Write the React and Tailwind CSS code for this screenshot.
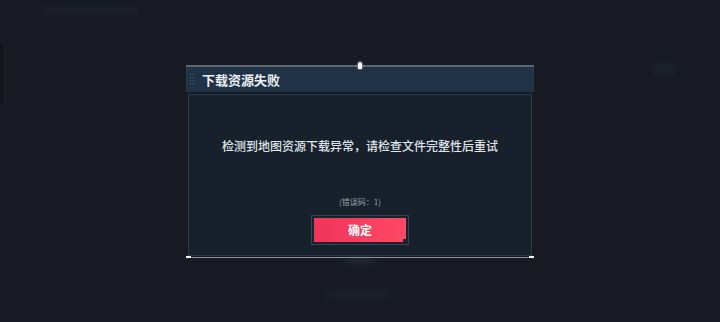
// Dialog: download failure
export default function App() {
  const font = { fontFamily: '"Noto Sans CJK SC", "Noto Sans", sans-serif' };
  return (
    <div className="relative w-[720px] h-[322px] overflow-hidden bg-[#171a23] flex items-center justify-center" style={font}>
      {/* faint background hints */}
      <div className="absolute left-[42px] top-[5px] w-[96px] h-[10px] rounded bg-[#1d2029] blur-[2px]" />
      <div className="absolute left-[-6px] top-[40px] w-[11px] h-[66px] rounded-md bg-[#12151c] border border-[#1f232c]" />
      <div className="absolute left-[653px] top-[62px] w-[22px] h-[14px] rounded bg-[#1e222b] blur-[3px]" />
      <div className="absolute left-[328px] top-[290px] w-[60px] h-[10px] rounded bg-[#1c2029] blur-[3px]" />
      <div className="absolute left-[345px] top-[256px] w-[30px] h-[8px] rounded bg-[#232831] blur-[3px]" />

      <div className="relative w-[348px] flex flex-col">
        {/* top line + pin */}
        <div className="h-[2px] bg-[#5d6670]" />
        <div className="absolute left-[172px] top-[-3px] w-[4px] h-[7px] rounded-t-full bg-white shadow-[0_0_3px_rgba(255,255,255,0.7)]" />

        {/* header */}
        <div className="h-[25px] bg-[#1f3246] flex items-center pl-[3px] border-x border-[#2a3b4d]">
          <div className="grid grid-cols-2 gap-[2px] mr-[8px] opacity-40">
            {Array.from({ length: 8 }).map((_, i) => (
              <div key={i} className="w-[1px] h-[1px] bg-[#9fb2c4]" />
            ))}
          </div>
          <span className="text-[13px] font-bold text-[#e9eef3] leading-none">下载资源失败</span>
        </div>

        {/* body */}
        <div className="mx-[2px] mt-[2px] h-[162px] border border-[#2c3a48] bg-[#18202b] flex flex-col items-center pt-[42px]">
          <p className="text-[12px] leading-[18px] text-[#dfe4ea] font-medium">检测到地图资源下载异常，请检查文件完整性后重试</p>
          <p className="mt-[41px] text-[8px] leading-[12px] text-[#9aa1a9]">(错误码：1)</p>
          <button className="relative mt-[8px] w-[96px] h-[28px] bg-gradient-to-r from-[#f0345a] to-[#ff4865] border-2 border-[#1a2230] shadow-[0_0_0_1px_#3a4350] text-white text-[12px] font-bold flex items-center justify-center">
            确定
            <span className="absolute right-0 bottom-0 w-[3px] h-[3px] bg-[#1a2230]" />
          </button>
        </div>

        {/* bottom line with caps */}
        <div className="relative mt-[1px] h-[1px] bg-[#8d949b]">
          <div className="absolute left-0 top-[-1px] w-[5px] h-[2px] bg-white" />
          <div className="absolute right-0 top-[-1px] w-[5px] h-[2px] bg-white" />
        </div>
      </div>
    </div>
  );
}
